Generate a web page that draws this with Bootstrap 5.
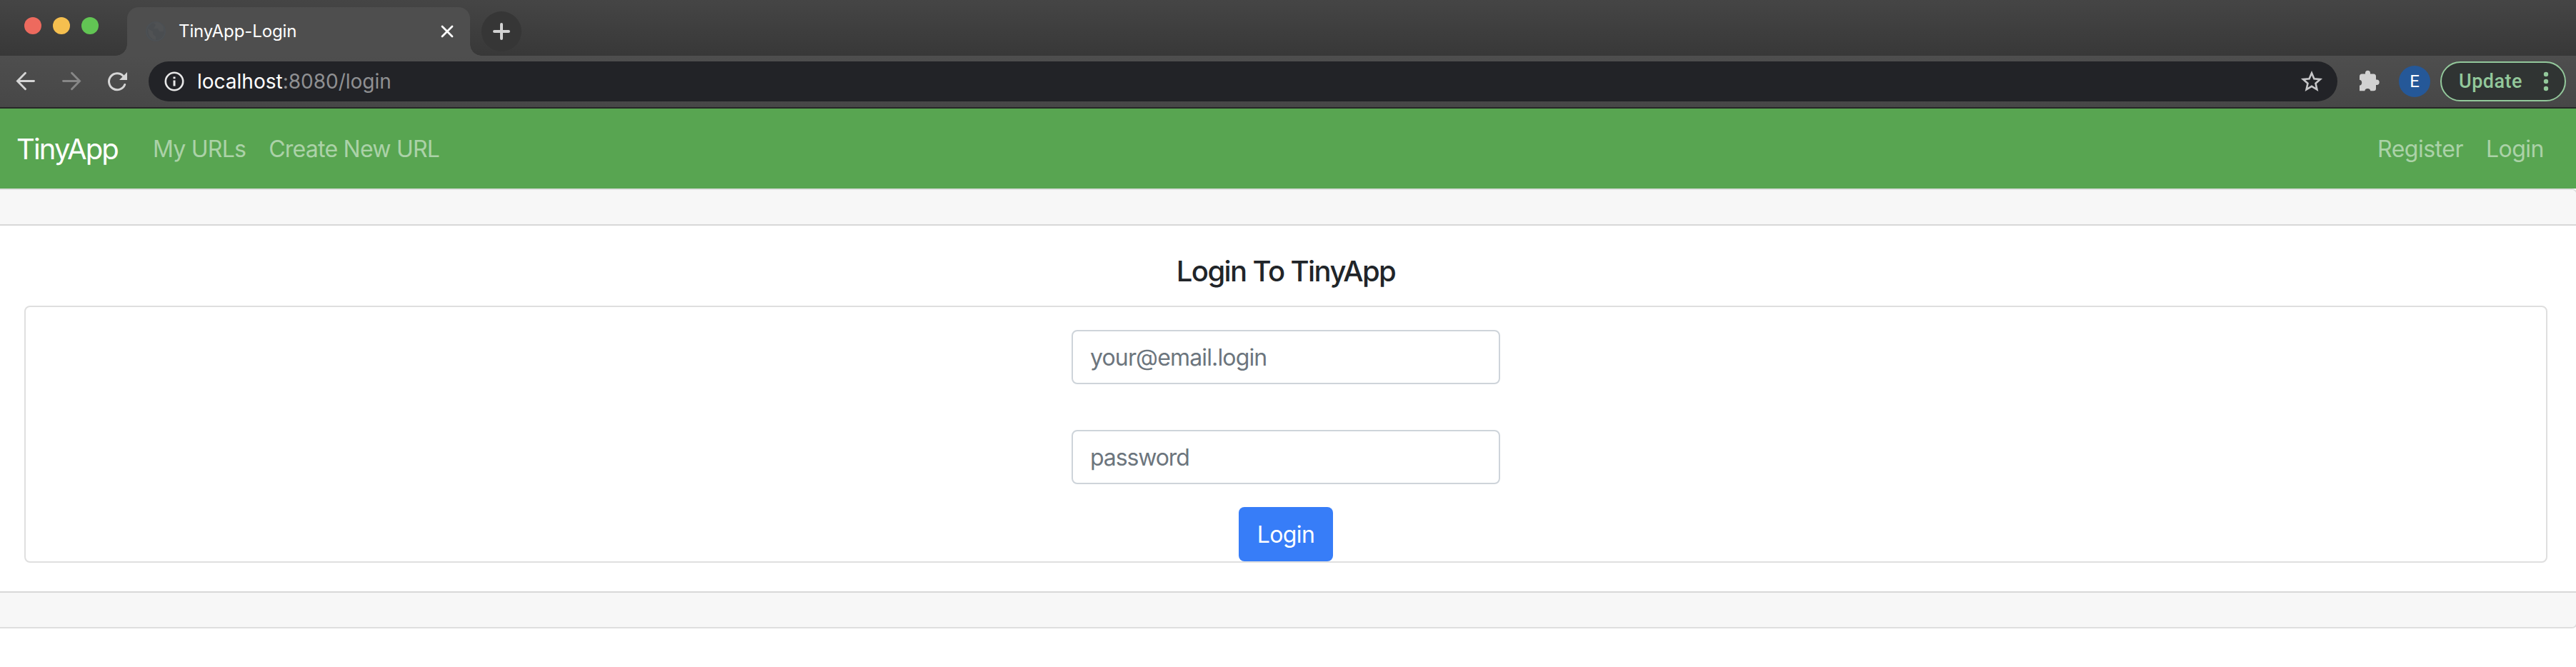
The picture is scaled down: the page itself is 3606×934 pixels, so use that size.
<!DOCTYPE html>
<html lang="en">
<head>
<meta charset="utf-8">
<title>TinyApp-Login</title>
<link href="https://cdn.jsdelivr.net/npm/bootstrap@5.3.0/dist/css/bootstrap.min.css" rel="stylesheet">
<style>
body{font-family:Inter,"Liberation Sans",sans-serif;font-size:32px;background:#fff;overflow:hidden;color:#212529}
svg{display:block;flex:none}
.tx{white-space:nowrap;display:block}
.tabstrip{height:78px;background:linear-gradient(#454545,#383838);padding-left:34px}
.lights{gap:16px;margin-top:24px}
.light{width:24px;height:24px;border-radius:50%}
.light-close{background:#ed6a5e}
.light-min{background:#f5bf4f}
.light-max{background:#62c554}
.tab{width:480px;height:68px;margin:10px 0 0 40px;padding:0 22px 0 26px;border-radius:16px 16px 0 0;background:#4e4e4e;position:relative;color:#fff;font-size:24px}
.tab::before,.tab::after{content:"";position:absolute;bottom:0;width:16px;height:16px}
.tab::before{left:-16px;background:radial-gradient(circle at 0 0,transparent 15.5px,#4e4e4e 16px)}
.tab::after{right:-16px;background:radial-gradient(circle at 100% 0,transparent 15.5px,#4e4e4e 16px)}
.tab .tx{margin-left:18px;letter-spacing:-.1px}
.newtab{width:56px;height:56px;margin:16px 0 0 16px;background:#363636}
.toolbar{height:74px;background:linear-gradient(#4e4e4e,#474747);border-bottom:2px solid #282828;padding:0 14px 0 20px}
.toolbar>svg+svg{margin-left:32px}
.toolbar>.address+svg{margin-left:28px}
.address{height:56px;width:3064px;margin-left:28px;padding:0 20px 0 22px;background:#222327;font-size:28px;color:#8f9092;letter-spacing:0}
.address .tx{margin-left:18px}
.address b{font-weight:400;color:#fff}
.avatar{width:44px;height:44px;background:#255898;color:#fff;font:24px Roboto,sans-serif;margin-left:26px}
.update{width:176px;height:56px;margin-left:14px;border:2px solid #93c89b;background:#303433;color:#93c89b;font:500 27px Roboto,sans-serif;letter-spacing:.5px;padding:0 18px 0 24px}
.topnav{height:112px;background:#58a551;padding:2px 45px 0 23px}
.topnav .navbar-brand{color:#fff;font-size:40px;letter-spacing:-1.85px;margin:0 49px 0 0;padding:0;width:142px}
.topnav .nav-link{color:rgba(255,255,255,.5);letter-spacing:-.75px;padding:0;margin-right:32px}
.topnav .nav-link.ms-auto,.topnav .nav-link.me-0{letter-spacing:-.5px}
.page{border:2px solid #dfdfdf;border-left:0;border-radius:0 8px 8px 0;height:616px;margin-right:-2px}
.page>.card-header,.page>.card-footer{height:50px;padding:0;background:#f7f7f7;border:0 solid #d8d8d8}
.page>.card-header{border-bottom-width:2px;border-radius:0 6px 0 0}
.page>.card-footer{border-top-width:2px;border-radius:0 0 6px 0}
.page>.card-body{padding:40px 40px 40px 34px}
.page h5{font-size:40px;line-height:48px;font-weight:500;letter-spacing:-1.6px;margin:0 0 24px}
.loginbox{border:2px solid #dfdfdf;border-radius:8px;height:360px;padding-top:32px}
.loginbox .form-control{width:600px;height:76px;border:2px solid #ced4da;border-radius:8px;font-size:32px;letter-spacing:-.85px;padding:0 24px}
.loginbox .form-control::placeholder{color:#6c757d}
.loginbox .btn{width:132px;height:76px;border:0;border-radius:8px;background:#377df8;font-size:32px;letter-spacing:-.6px;padding:2px 0 0;color:#fff}
.loginbox .pw{margin:64px 0 32px;letter-spacing:-1.1px}
</style>
</head>
<body>
<header>
<div class="tabstrip d-flex align-items-start">
  <div class="lights d-flex"><i class="light light-close"></i><i class="light light-min"></i><i class="light light-max"></i></div>
  <div class="tab d-flex align-items-center">
    <svg width="28" height="28" viewBox="0 0 28 28"><circle cx="14" cy="14" r="13" fill="#4a4d50" stroke="#4c5054" stroke-width="2"/><path d="M3 10l7 4v4l4 3v5q-11-2-11-16zM11 2l3 3-3 5h6l2 4h6q2-9-8-13z" fill="#505254"/></svg>
    <span class="tx">TinyApp-Login</span>
    <svg class="ms-auto" width="20" height="20" viewBox="0 0 20 20" stroke="#fff" stroke-width="2.8" stroke-linecap="round"><path d="M3 3l14 14m0-14l-14 14"/></svg>
  </div>
  <div class="newtab rounded-circle d-flex align-items-center justify-content-center"><svg width="24" height="24" viewBox="0 0 24 24" stroke="#d2d2d2" stroke-width="4" stroke-linecap="round"><path d="M12 2v20M2 12h20"/></svg></div>
</div>
<div class="toolbar d-flex align-items-center">
  <svg width="32" height="32" viewBox="0 0 32 32" fill="none" stroke="#d5d5d5" stroke-width="2.900" stroke-linecap="round"><path d="M27.500 15.500H5M15.500 4.300L4.500 15.500l11 11.200"/></svg>
  <svg width="32" height="32" viewBox="0 0 32 32" fill="none" stroke="#878787" stroke-width="2.900" stroke-linecap="round"><path d="M4.500 15.500h22.500M16.500 4.300l11 11.200-11 11.200"/></svg>
  <svg width="32" height="32" viewBox="0 0 32 32"><path d="M26.700 20.500A11.500 11.500 0 1 1 24.500 8.400" fill="none" stroke="#d5d5d5" stroke-width="3" stroke-linecap="round"/><path d="M30 3v11H19z" fill="#d5d5d5"/></svg>
  <div class="address rounded-pill d-flex align-items-center">
    <svg width="28" height="28" viewBox="0 0 28 28"><circle cx="14" cy="14" r="12.200" fill="none" stroke="#e8e8e8" stroke-width="2.600"/><path d="M14 12.500V20.500M14 7.500V10.300" stroke="#e8e8e8" stroke-width="3"/></svg>
    <span class="tx"><b>localhost</b>:8080/login</span>
    <svg class="ms-auto" width="32" height="32" viewBox="0 0 32 32" fill="none" stroke="#c6c6c8" stroke-width="2.600"><path d="M16 4.300l3.400 8 8.600.8-6.500 5.700 1.900 8.500L16 22.800l-7.400 4.500 1.900-8.500L4 13.100l8.600-.8z"/></svg>
  </div>
  <svg width="32" height="32" viewBox="0 0 32 32" fill="#d2d2d2"><path d="M3 9q0-3.500 3.500-3.500H11V4.300a3.500 3.500 0 0 1 7 0v1.200h4.500Q26 5.500 26 9v4.500h1a3.700 3.700 0 0 1 0 7.400h-1V26q0 3.300-3.500 3.300h-4.200a4.100 4.100 0 0 0-8 0H3v-7.500a4.100 4.100 0 0 0 0-8z"/></svg>
  <div class="avatar rounded-circle d-flex align-items-center justify-content-center">E</div>
  <div class="update rounded-pill d-flex align-items-center justify-content-between"><span class="tx">Update</span><svg width="16" height="32" viewBox="0 0 16 32" fill="#93c89b"><circle cx="8" cy="6" r="3.200"/><circle cx="8" cy="16" r="3.200"/><circle cx="8" cy="26" r="3.200"/></svg></div>
</div>
</header>
<nav class="topnav navbar navbar-expand flex-nowrap">
  <a class="navbar-brand tx" href="#">TinyApp</a>
  <a class="nav-link tx" href="#">My URLs</a>
  <a class="nav-link tx" href="#">Create New URL</a>
  <a class="nav-link tx ms-auto" href="#">Register</a>
  <a class="nav-link tx me-0" href="#">Login</a>
</nav>
<main class="card page">
  <div class="card-header"></div>
  <div class="card-body">
    <h5 class="text-center">Login To TinyApp</h5>
    <form class="loginbox d-flex flex-column align-items-center">
      <input class="form-control" type="email" placeholder="your@email.login">
      <input class="form-control pw" type="password" placeholder="password">
      <button class="btn btn-primary" type="button">Login</button>
    </form>
  </div>
  <div class="card-footer"></div>
</main>
<script src="https://cdn.jsdelivr.net/npm/bootstrap@5.3.0/dist/js/bootstrap.bundle.min.js"></script>
</body>
</html>
